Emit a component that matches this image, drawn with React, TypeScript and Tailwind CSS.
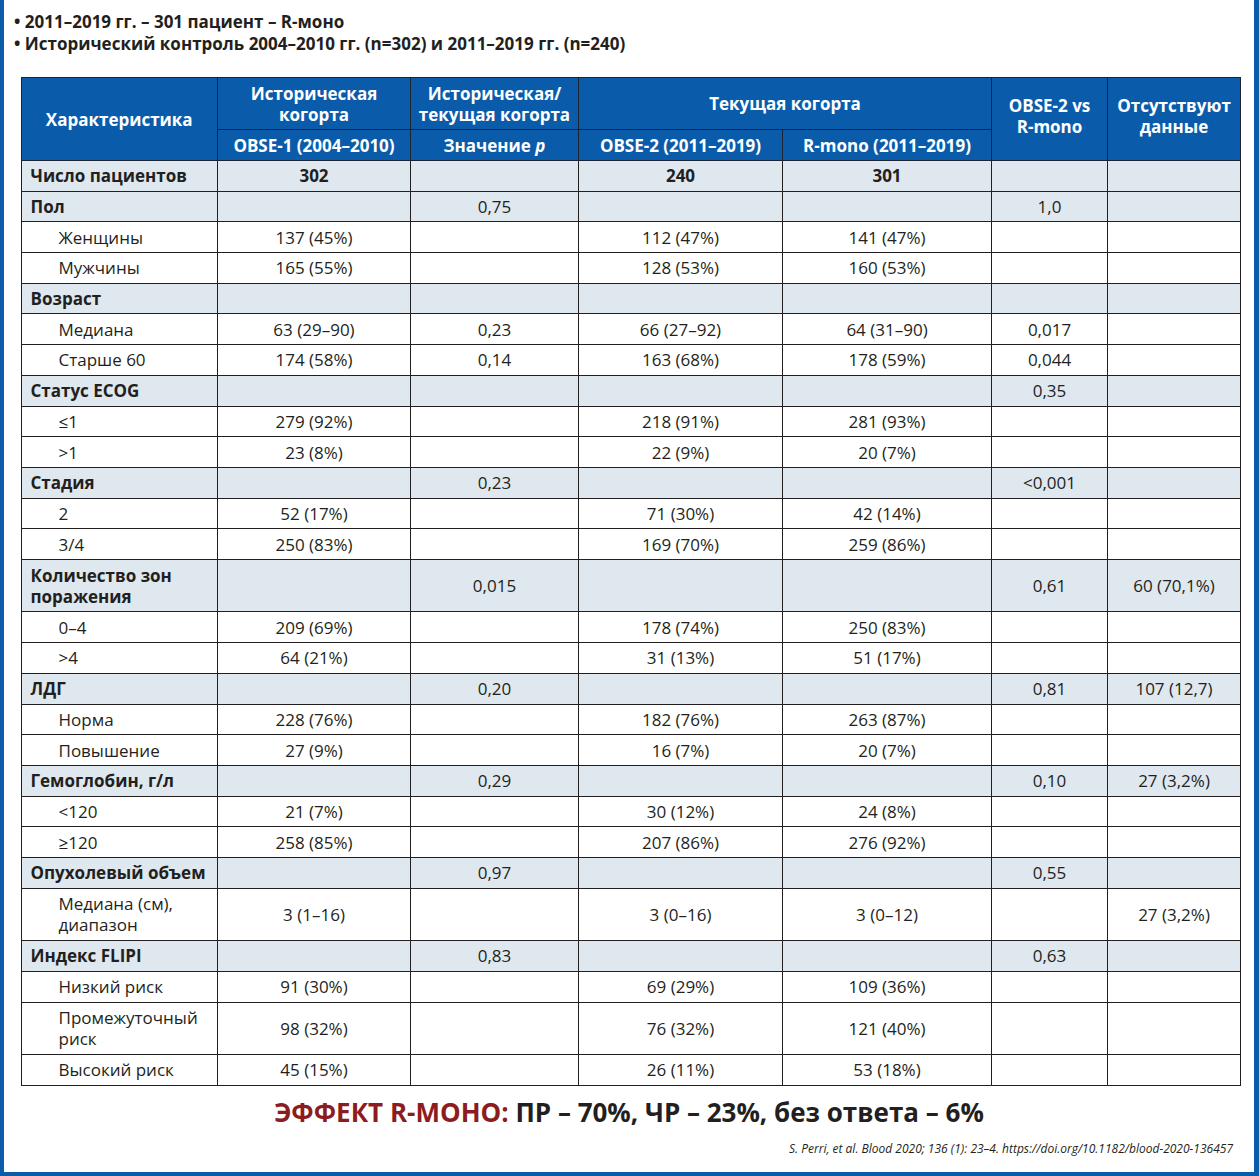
import React from "react";

type Row = {
  label: string;
  cat?: boolean;
  indent?: boolean;
  tall?: boolean;
  bold?: boolean;
  v: string[];
};

const rows: Row[] = [
  { label: "Число пациентов", cat: true, bold: true, v: ["302", "", "240", "301", "", ""] },
  { label: "Пол", cat: true, v: ["", "0,75", "", "", "1,0", ""] },
  { label: "Женщины", indent: true, v: ["137 (45%)", "", "112 (47%)", "141 (47%)", "", ""] },
  { label: "Мужчины", indent: true, v: ["165 (55%)", "", "128 (53%)", "160 (53%)", "", ""] },
  { label: "Возраст", cat: true, v: ["", "", "", "", "", ""] },
  { label: "Медиана", indent: true, v: ["63 (29–90)", "0,23", "66 (27–92)", "64 (31–90)", "0,017", ""] },
  { label: "Старше 60", indent: true, v: ["174 (58%)", "0,14", "163 (68%)", "178 (59%)", "0,044", ""] },
  { label: "Статус ECOG", cat: true, v: ["", "", "", "", "0,35", ""] },
  { label: "≤1", indent: true, v: ["279 (92%)", "", "218 (91%)", "281 (93%)", "", ""] },
  { label: ">1", indent: true, v: ["23 (8%)", "", "22 (9%)", "20 (7%)", "", ""] },
  { label: "Стадия", cat: true, v: ["", "0,23", "", "", "<0,001", ""] },
  { label: "2", indent: true, v: ["52 (17%)", "", "71 (30%)", "42 (14%)", "", ""] },
  { label: "3/4", indent: true, v: ["250 (83%)", "", "169 (70%)", "259 (86%)", "", ""] },
  { label: "Количество зон поражения", cat: true, tall: true, v: ["", "0,015", "", "", "0,61", "60 (70,1%)"] },
  { label: "0–4", indent: true, v: ["209 (69%)", "", "178 (74%)", "250 (83%)", "", ""] },
  { label: ">4", indent: true, v: ["64 (21%)", "", "31 (13%)", "51 (17%)", "", ""] },
  { label: "ЛДГ", cat: true, v: ["", "0,20", "", "", "0,81", "107 (12,7)"] },
  { label: "Норма", indent: true, v: ["228 (76%)", "", "182 (76%)", "263 (87%)", "", ""] },
  { label: "Повышение", indent: true, v: ["27 (9%)", "", "16 (7%)", "20 (7%)", "", ""] },
  { label: "Гемоглобин, г/л", cat: true, v: ["", "0,29", "", "", "0,10", "27 (3,2%)"] },
  { label: "<120", indent: true, v: ["21 (7%)", "", "30 (12%)", "24 (8%)", "", ""] },
  { label: "≥120", indent: true, v: ["258 (85%)", "", "207 (86%)", "276 (92%)", "", ""] },
  { label: "Опухолевый объем", cat: true, v: ["", "0,97", "", "", "0,55", ""] },
  { label: "Медиана (см), диапазон", indent: true, tall: true, v: ["3 (1–16)", "", "3 (0–16)", "3 (0–12)", "", "27 (3,2%)"] },
  { label: "Индекс FLIPI", cat: true, v: ["", "0,83", "", "", "0,63", ""] },
  { label: "Низкий риск", indent: true, v: ["91 (30%)", "", "69 (29%)", "109 (36%)", "", ""] },
  { label: "Промежуточный риск", indent: true, tall: true, v: ["98 (32%)", "", "76 (32%)", "121 (40%)", "", ""] },
  { label: "Высокий риск", indent: true, v: ["45 (15%)", "", "26 (11%)", "53 (18%)", "", ""] },
];

export default function App() {
  return (
    <div className="w-[1259px] h-[1176px] bg-white border-l-4 border-r-[5px] border-b-4 border-[#0a5cab] font-['Open_Sans',sans-serif] text-[#231f20]">
      {/* вводные пункты */}
      <div className="pl-[10px] pt-[11px] text-[17px] leading-[22px] font-bold">
        <p>• 2011–2019 гг. – 301 пациент – R-моно</p>
        <p>• Исторический контроль 2004–2010 гг. (n=302) и 2011–2019 гг. (n=240)</p>
      </div>

      <div className="pl-[16.5px] pt-[22px]">
        <table className="w-[1219.5px] table-fixed border-collapse text-[17px] leading-[21px]">
          <colgroup>
            <col className="w-[196.5px]" />
            <col className="w-[193px]" />
            <col className="w-[168px]" />
            <col className="w-[204px]" />
            <col className="w-[209px]" />
            <col className="w-[116px]" />
            <col className="w-[133px]" />
          </colgroup>
          <thead className="bg-[#0a5cab] text-white font-bold">
            <tr className="h-[52px]">
              <th rowSpan={2} className="border border-[#1c2433] font-bold">Характеристика</th>
              <th className="border border-[#1c2433] font-bold leading-[21px]">Историческая<br />когорта</th>
              <th className="border border-[#1c2433] font-bold leading-[21px]">Историческая/<br />текущая когорта</th>
              <th colSpan={2} className="border border-[#1c2433] font-bold">Текущая когорта</th>
              <th rowSpan={2} className="border border-[#1c2433] font-bold align-top pt-[17px] leading-[21px]">OBSE-2 vs<br />R-mono</th>
              <th rowSpan={2} className="border border-[#1c2433] font-bold align-top pt-[17px] leading-[21px]">Отсутствуют<br />данные</th>
            </tr>
            <tr className="h-[31px]">
              <th className="border border-[#1c2433] font-bold">OBSE-1 (2004–2010)</th>
              <th className="border border-[#1c2433] font-bold">Значение <i>p</i></th>
              <th className="border border-[#1c2433] font-bold">OBSE-2 (2011–2019)</th>
              <th className="border border-[#1c2433] font-bold">R-mono (2011–2019)</th>
            </tr>
          </thead>
          <tbody>
            {rows.map((r, i) => (
              <tr key={i} className={`${r.tall ? "h-[52.5px]" : "h-[30.7px]"} ${r.cat ? "bg-[#dfe7ef]" : "bg-white"}`}>
                <td
                  className={`border border-[#231f20] text-left leading-[21px] ${r.indent ? "pl-[37px] pr-2" : "pl-[9px] pr-2"} ${r.cat ? "font-bold" : ""}`}
                >
                  {r.label}
                </td>
                {r.v.map((val, j) => (
                  <td key={j} className={`border border-[#231f20] text-center ${r.bold ? "font-bold" : ""}`}>
                    {val}
                  </td>
                ))}
              </tr>
            ))}
          </tbody>
        </table>
      </div>

      {/* итог */}
      <div className="mt-[9px] text-center text-[26px] leading-[34px] font-bold">
        <span className="text-[#8c1c20]">ЭФФЕКТ R-МОНО:</span> ПР – 70%, ЧР – 23%, без ответа – 6%
      </div>
      <div className="pr-[21px] mt-[12px] text-right text-[12px] leading-[16px] italic">
        S. Perri, et al. Blood 2020; 136 (1): 23–4. https://doi.org/10.1182/blood-2020-136457
      </div>
    </div>
  );
}
